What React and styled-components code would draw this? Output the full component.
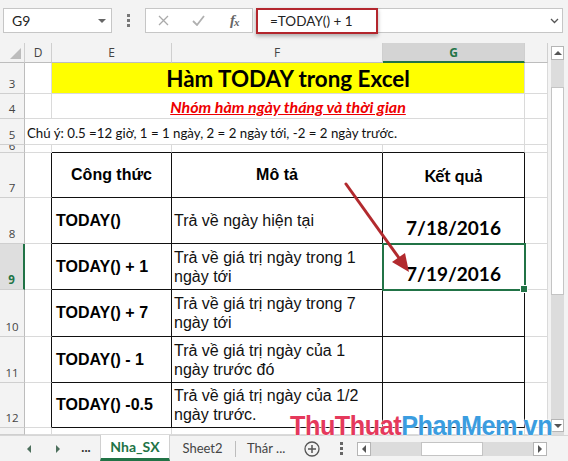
import React from "react";
import styled, { createGlobalStyle } from "styled-components";

const GRID = "#dadada";
const HEAD_BG = "#f3f3f3";
const HEAD_LINE = "#cfcfcf";
const GREEN = "#217346";
const BLACK = "#111";

const GlobalStyle = createGlobalStyle`
  html, body { margin: 0; padding: 0; background: #f3f3f3; }
  body { width: 568px; height: 461px; overflow: hidden; }
  * { box-sizing: border-box; }
`;

const Window = styled.div`
  position: relative;
  width: 568px;
  height: 461px;
  background: #f3f3f3;
  display: flex;
  flex-direction: column;
  font-family: Lato, "Liberation Sans", sans-serif;
  overflow: hidden;
`;

/* ---------- formula bar ---------- */

const Toolbar = styled.div`
  height: 43px;
  flex: none;
  display: flex;
  align-items: flex-start;
  padding: 8px 5px 0 3px;
`;

const Box = styled.div`
  height: 25px;
  background: #fff;
  border: 1px solid #c6c6c6;
  display: flex;
  align-items: center;
`;

const NameBox = styled(Box)`
  width: 109px;
  justify-content: space-between;
  padding: 0 5px 0 8px;
  font-size: 14px;
  color: #222;
`;

const VDots = styled.div`
  width: 33px;
  height: 25px;
  display: flex;
  align-items: center;
  justify-content: center;
`;

const FuncBox = styled(Box)`
  width: 108px;
`;

const FuncSlot = styled.div`
  width: 36px;
  display: flex;
  justify-content: center;
  align-items: center;
`;

const Fx = styled.span`
  font-family: "Liberation Serif", serif;
  font-style: italic;
  font-weight: 700;
  font-size: 15px;
  color: #666;
  letter-spacing: -1px;
  sub {
    font-size: 11px;
    vertical-align: -1px;
  }
`;

const FormulaBox = styled(Box)`
  flex: 1;
  margin-left: 3px;
  align-items: stretch;
`;

const Highlight = styled.div`
  width: 122px;
  margin: -1px 0 -2px -1px;
  border: 2px solid #b3262d;
  box-shadow: 0 2px 4px rgba(0, 0, 0, 0.3);
  display: flex;
  align-items: center;
  padding-left: 12px;
  font-size: 13.5px;
  color: #222;
`;

const Spacer = styled.div`
  flex: 1;
`;

const Chevron = styled.div`
  width: 16px;
  display: flex;
  align-items: center;
  justify-content: center;
`;

/* ---------- sheet ---------- */

const Main = styled.div`
  height: 392px;
  flex: none;
  display: flex;
`;

const Sheet = styled.div`
  width: 548px;
  display: grid;
  grid-template-columns: 25px 27px 120px 211px 142px 23px;
  grid-template-rows: 20px 31px 25px 26px 8px 45px 46px 46px 47px 46px 45px 7px;
  background: #fff;
`;

const Corner = styled.div`
  background: ${HEAD_BG};
  border-right: 1px solid ${HEAD_LINE};
  border-bottom: 1px solid #bdbdbd;
  display: flex;
  align-items: flex-end;
  justify-content: flex-end;
  padding: 0 3px 3px 0;
`;

const ColHead = styled.div`
  background: ${(p) => (p.$sel ? "#d4d4d4" : HEAD_BG)};
  border-right: 1px solid ${HEAD_LINE};
  border-bottom: ${(p) => (p.$sel ? `2px solid ${GREEN}` : "1px solid #bdbdbd")};
  display: flex;
  align-items: center;
  justify-content: center;
  font-family: "Open Sans", sans-serif;
  font-size: 12px;
  font-weight: ${(p) => (p.$sel ? 700 : 400)};
  color: ${(p) => (p.$sel ? GREEN : "#444")};
  padding-top: ${(p) => (p.$sel ? "1px" : "0")};
`;

const RowHead = styled.div`
  background: ${(p) => (p.$sel ? "#dedede" : HEAD_BG)};
  border-right: ${(p) => (p.$sel ? `2px solid ${GREEN}` : "1px solid #bdbdbd")};
  border-bottom: 1px solid ${HEAD_LINE};
  display: flex;
  align-items: flex-end;
  justify-content: center;
  padding-bottom: ${(p) => (p.$clip ? "4px" : "2px")};
  overflow: hidden;
  font-family: "Open Sans", sans-serif;
  font-size: 11.5px;
  line-height: ${(p) => (p.$clip ? "4px" : "15px")};
  font-weight: ${(p) => (p.$sel ? 700 : 400)};
  color: ${(p) => (p.$sel ? GREEN : "#444")};
`;

const Cell = styled.div`
  min-width: 0;
  background: ${(p) => p.$bg || "#fff"};
  border-right: 1px solid ${(p) => (p.$r ? BLACK : GRID)};
  border-bottom: 1px solid ${(p) => (p.$b ? BLACK : GRID)};
  ${(p) => p.$span && `grid-column: span ${p.$span};`}
`;

const Title = styled(Cell)`
  display: flex;
  align-items: center;
  justify-content: center;
  font-size: 22.4px;
  font-weight: 700;
  color: #000;
  padding-top: 1px;
`;

const Subtitle = styled(Cell)`
  display: flex;
  align-items: center;
  justify-content: center;
  font-size: 16px;
  font-weight: 700;
  font-style: italic;
  text-decoration: underline;
  color: #ee0000;
  padding-top: 1px;
`;

const Note = styled(Cell)`
  display: flex;
  align-items: flex-end;
  padding: 0 0 3px 2px;
  white-space: nowrap;
  font-size: 13.25px;
  color: #111;
`;

const HeadCell = styled(Cell)`
  display: flex;
  align-items: center;
  justify-content: center;
  font-family: ${(p) => (p.$calibri ? "Lato" : '"Liberation Sans"')}, sans-serif;
  font-size: ${(p) => (p.$calibri ? "17px" : "16px")};
  font-weight: 700;
  color: #000;
`;

const FormulaCell = styled(Cell)`
  display: flex;
  align-items: center;
  padding-left: 4px;
  font-family: "Liberation Sans", sans-serif;
  font-size: 16px;
  font-weight: 700;
  color: #000;
  white-space: nowrap;
`;

const DescCell = styled(Cell)`
  display: flex;
  flex-direction: column;
  justify-content: center;
  padding-left: 2px;
  font-family: "Liberation Sans", sans-serif;
  font-size: 16px;
  line-height: 19px;
  color: #111;
  white-space: nowrap;
`;

const ResultCell = styled(Cell)`
  position: relative;
  display: flex;
  align-items: flex-end;
  justify-content: center;
  padding-bottom: 4px;
  font-size: 19px;
  font-weight: 700;
  color: #000;
  ${(p) =>
    p.$sel &&
    `
    z-index: 2;
    outline: 2px solid ${GREEN};
    outline-offset: -1px;
    &::after {
      content: "";
      position: absolute;
      right: -4px;
      bottom: -4px;
      width: 6px;
      height: 6px;
      background: ${GREEN};
      border: 1px solid #fff;
    }
  `}
`;

/* ---------- scroll bars ---------- */

const VScroll = styled.div`
  width: 13px;
  margin: 3px 0 0 3px;
  display: flex;
  flex-direction: column;
  background: #dcdcdc;
`;

const ScrollBtn = styled.div`
  flex: none;
  width: ${(p) => p.$w || "100%"};
  height: ${(p) => p.$h || "100%"};
  background: #fff;
  border: 1px solid #b5b5b5;
  display: flex;
  align-items: center;
  justify-content: center;
`;

const Track = styled.div`
  flex: none;
  ${(p) => (p.$horizontal ? `width: ${p.$size}px;` : `height: ${p.$size}px;`)}
  background: #dcdcdc;
`;

const Thumb = styled.div`
  flex: none;
  ${(p) => (p.$horizontal ? `width: ${p.$size}px;` : `height: ${p.$size}px;`)}
  background: #fff;
  border: 1px solid #c4c4c4;
`;

/* ---------- sheet tabs ---------- */

const TabsBar = styled.div`
  flex: 1;
  display: flex;
  align-items: stretch;
  padding-left: 14px;
  border-top: 1px solid #d6d6d6;
  font-size: 13px;
  color: #444;
`;

const NavBtn = styled.div`
  width: 29px;
  display: flex;
  align-items: center;
  justify-content: center;
`;

const More = styled.div`
  width: 28px;
  display: flex;
  align-items: center;
  justify-content: center;
  font-weight: 700;
  color: #333;
  padding-bottom: 4px;
`;

const Tab = styled.div`
  width: ${(p) => p.$w}px;
  display: flex;
  align-items: center;
  justify-content: ${(p) => (p.$left ? "flex-start" : "center")};
  padding-left: ${(p) => (p.$left ? "11px" : "0")};
  white-space: nowrap;
  overflow: hidden;
  background: ${(p) => (p.$active ? "#fff" : "transparent")};
  color: ${(p) => (p.$active ? GREEN : "#444")};
  font-weight: ${(p) => (p.$active ? 700 : 400)};
  font-size: ${(p) => (p.$active ? "14px" : "13px")};
  border-bottom: ${(p) => (p.$active ? `3px solid ${GREEN}` : "none")};
  border-left: ${(p) => (p.$active ? "1px solid #d0d0d0" : "none")};
  border-right: ${(p) => (p.$active ? "1px solid #d0d0d0" : "none")};
  margin-top: -1px;
`;

const TabSep = styled.div`
  width: 1px;
  margin: 5px 0 4px;
  background: #bdbdbd;
`;

const IconSlot = styled.div`
  width: ${(p) => p.$w}px;
  display: flex;
  align-items: center;
  justify-content: center;
`;

const HScroll = styled.div`
  margin: 6px 0 0 6px;
  height: 14px;
  display: flex;
  background: #dcdcdc;
`;

/* ---------- overlays ---------- */

const Overlay = styled.svg`
  position: absolute;
  left: 0;
  top: 0;
  z-index: 5;
  pointer-events: none;
`;

const Watermark = styled.div`
  position: absolute;
  left: 290px;
  top: 410px;
  z-index: 6;
  font-family: "Liberation Sans", sans-serif;
  font-weight: 700;
  font-size: 28px;
  letter-spacing: -0.5px;
  white-space: nowrap;
  transform: scaleX(0.9);
  transform-origin: left top;
  text-shadow: 0 0 2px #fff, 0 0 2px #fff;
  pointer-events: none;
`;

const Part = styled.span`
  color: ${(p) => p.$c};
`;

const rows = [
  { n: 8, f: "TODAY()", d: ["Trả về ngày hiện tại"], r: "7/18/2016" },
  { n: 9, f: "TODAY() + 1", d: ["Trả về giá trị ngày trong 1", "ngày tới"], r: "7/19/2016", sel: true },
  { n: 10, f: "TODAY() + 7", d: ["Trả về giá trị ngày trong 7", "ngày tới"] },
  { n: 11, f: "TODAY() - 1", d: ["Trả về giá trị ngày của 1", "ngày trước đó"] },
  { n: 12, f: "TODAY() -0.5", d: ["Trả về giá trị ngày của 1/2", "ngày trước."] },
];

const Tri = ({ dir = "down", color = "#555", size = 4 }) => {
  const s = size;
  const pts = {
    down: `0,0 ${2 * s},0 ${s},${s}`,
    up: `0,${s} ${2 * s},${s} ${s},0`,
    left: `${s},0 ${s},${2 * s} 0,${s}`,
    right: `0,0 0,${2 * s} ${s},${s}`,
  }[dir];
  const w = dir === "left" || dir === "right" ? s : 2 * s;
  const h = dir === "left" || dir === "right" ? 2 * s : s;
  return (
    <svg width={w} height={h} viewBox={`0 0 ${w} ${h}`}>
      <polygon points={pts} fill={color} />
    </svg>
  );
};

export default function App() {
  return (
    <>
      <GlobalStyle />
      <Window>
        <Toolbar>
          <NameBox>
            G9
            <Tri dir="down" color="#666" size={4} />
          </NameBox>
          <VDots>
            <svg width="3" height="13" viewBox="0 0 3 13">
              <rect x="0" y="0" width="3" height="3" fill="#777" />
              <rect x="0" y="5" width="3" height="3" fill="#777" />
              <rect x="0" y="10" width="3" height="3" fill="#777" />
            </svg>
          </VDots>
          <FuncBox>
            <FuncSlot>
              <svg width="11" height="11" viewBox="0 0 11 11">
                <path d="M1 1 L10 10 M10 1 L1 10" stroke="#aaa" strokeWidth="1.3" />
              </svg>
            </FuncSlot>
            <FuncSlot>
              <svg width="13" height="11" viewBox="0 0 13 11">
                <path d="M1 6 L5 10 L12 1" stroke="#b0b0b0" strokeWidth="1.8" fill="none" />
              </svg>
            </FuncSlot>
            <FuncSlot>
              <Fx>
                f<sub>x</sub>
              </Fx>
            </FuncSlot>
          </FuncBox>
          <FormulaBox>
            <Highlight>=TODAY() + 1</Highlight>
            <Spacer />
            <Chevron>
              <svg width="9" height="6" viewBox="0 0 9 6">
                <path d="M1 1 L4.5 4.5 L8 1" stroke="#555" strokeWidth="1.3" fill="none" />
              </svg>
            </Chevron>
          </FormulaBox>
        </Toolbar>

        <Main>
          <Sheet>
            <Corner>
              <svg width="11" height="11" viewBox="0 0 11 11">
                <polygon points="11,0 11,11 0,11" fill="#bcbcbc" />
              </svg>
            </Corner>
            <ColHead>D</ColHead>
            <ColHead>E</ColHead>
            <ColHead>F</ColHead>
            <ColHead $sel>G</ColHead>
            <ColHead />

            <RowHead>3</RowHead>
            <Cell />
            <Title $span={3} $bg="#ffff00">
              Hàm TODAY trong Excel
            </Title>
            <Cell />

            <RowHead>4</RowHead>
            <Cell />
            <Subtitle $span={3}>Nhóm hàm ngày tháng và thời gian</Subtitle>
            <Cell />

            <RowHead>5</RowHead>
            <Note $span={4}>Chú ý: 0.5 =12 giờ, 1 = 1 ngày, 2 = 2 ngày tới, -2 = 2 ngày trước.</Note>
            <Cell />

            <RowHead $clip>6</RowHead>
            <Cell />
            <Cell $b />
            <Cell $b />
            <Cell $b />
            <Cell />

            <RowHead>7</RowHead>
            <Cell $r />
            <HeadCell $r $b>
              Công thức
            </HeadCell>
            <HeadCell $r $b>
              Mô tả
            </HeadCell>
            <HeadCell $r $b $calibri>
              Kết quả
            </HeadCell>
            <Cell />

            {rows.map((row) => (
              <React.Fragment key={row.n}>
                <RowHead $sel={row.sel}>{row.n}</RowHead>
                <Cell $r />
                <FormulaCell $r $b>
                  {row.f}
                </FormulaCell>
                <DescCell $r $b>
                  {row.d.map((line) => (
                    <span key={line}>{line}</span>
                  ))}
                </DescCell>
                <ResultCell $r $b $sel={row.sel}>
                  {row.r}
                </ResultCell>
                <Cell />
              </React.Fragment>
            ))}

            <RowHead />
            <Cell />
            <Cell />
            <Cell />
            <Cell />
            <Cell />
          </Sheet>

          <VScroll>
            <ScrollBtn $h="14px">
              <Tri dir="up" color="#555" size={4} />
            </ScrollBtn>
            <Track $size={27} />
            <Thumb $size={208} />
            <Track $size={124} />
            <ScrollBtn $h="13px">
              <Tri dir="down" color="#555" size={4} />
            </ScrollBtn>
          </VScroll>
        </Main>

        <TabsBar>
          <NavBtn>
            <Tri dir="left" color="#4c6f5c" size={4} />
          </NavBtn>
          <NavBtn>
            <Tri dir="right" color="#4c6f5c" size={4} />
          </NavBtn>
          <More>...</More>
          <Tab $w={70} $active>
            Nha_SX
          </Tab>
          <Tab $w={65}>Sheet2</Tab>
          <TabSep />
          <Tab $w={57} $left>
            Thár ...
          </Tab>
          <IconSlot $w={38}>
            <svg width="16" height="16" viewBox="0 0 16 16">
              <circle cx="8" cy="8" r="7" stroke="#555" strokeWidth="1.3" fill="none" />
              <path d="M8 4 V12 M4 8 H12" stroke="#555" strokeWidth="1.5" />
            </svg>
          </IconSlot>
          <IconSlot $w={20}>
            <svg width="3" height="13" viewBox="0 0 3 13">
              <rect x="0" y="0" width="3" height="3" fill="#666" />
              <rect x="0" y="5" width="3" height="3" fill="#666" />
              <rect x="0" y="10" width="3" height="3" fill="#666" />
            </svg>
          </IconSlot>
          <HScroll>
            <ScrollBtn $w="14px">
              <Tri dir="left" color="#555" size={4} />
            </ScrollBtn>
            <Track $horizontal $size={50} />
            <Thumb $horizontal $size={62} />
            <Track $horizontal $size={50} />
            <ScrollBtn $w="14px">
              <Tri dir="right" color="#555" size={4} />
            </ScrollBtn>
          </HScroll>
        </TabsBar>

        <Overlay width="568" height="461" viewBox="0 0 568 461">
          <line x1="346" y1="184" x2="399" y2="258" stroke="#b22a2e" strokeWidth="3" strokeLinecap="round" />
          <polygon points="409,272 392,262 405,253" fill="#b22a2e" />
        </Overlay>

        <Watermark>
          <Part $c="#e5395c">ThuThuat</Part>
          <Part $c="#3b9de0">PhanMem.vn</Part>
        </Watermark>
      </Window>
    </>
  );
}
